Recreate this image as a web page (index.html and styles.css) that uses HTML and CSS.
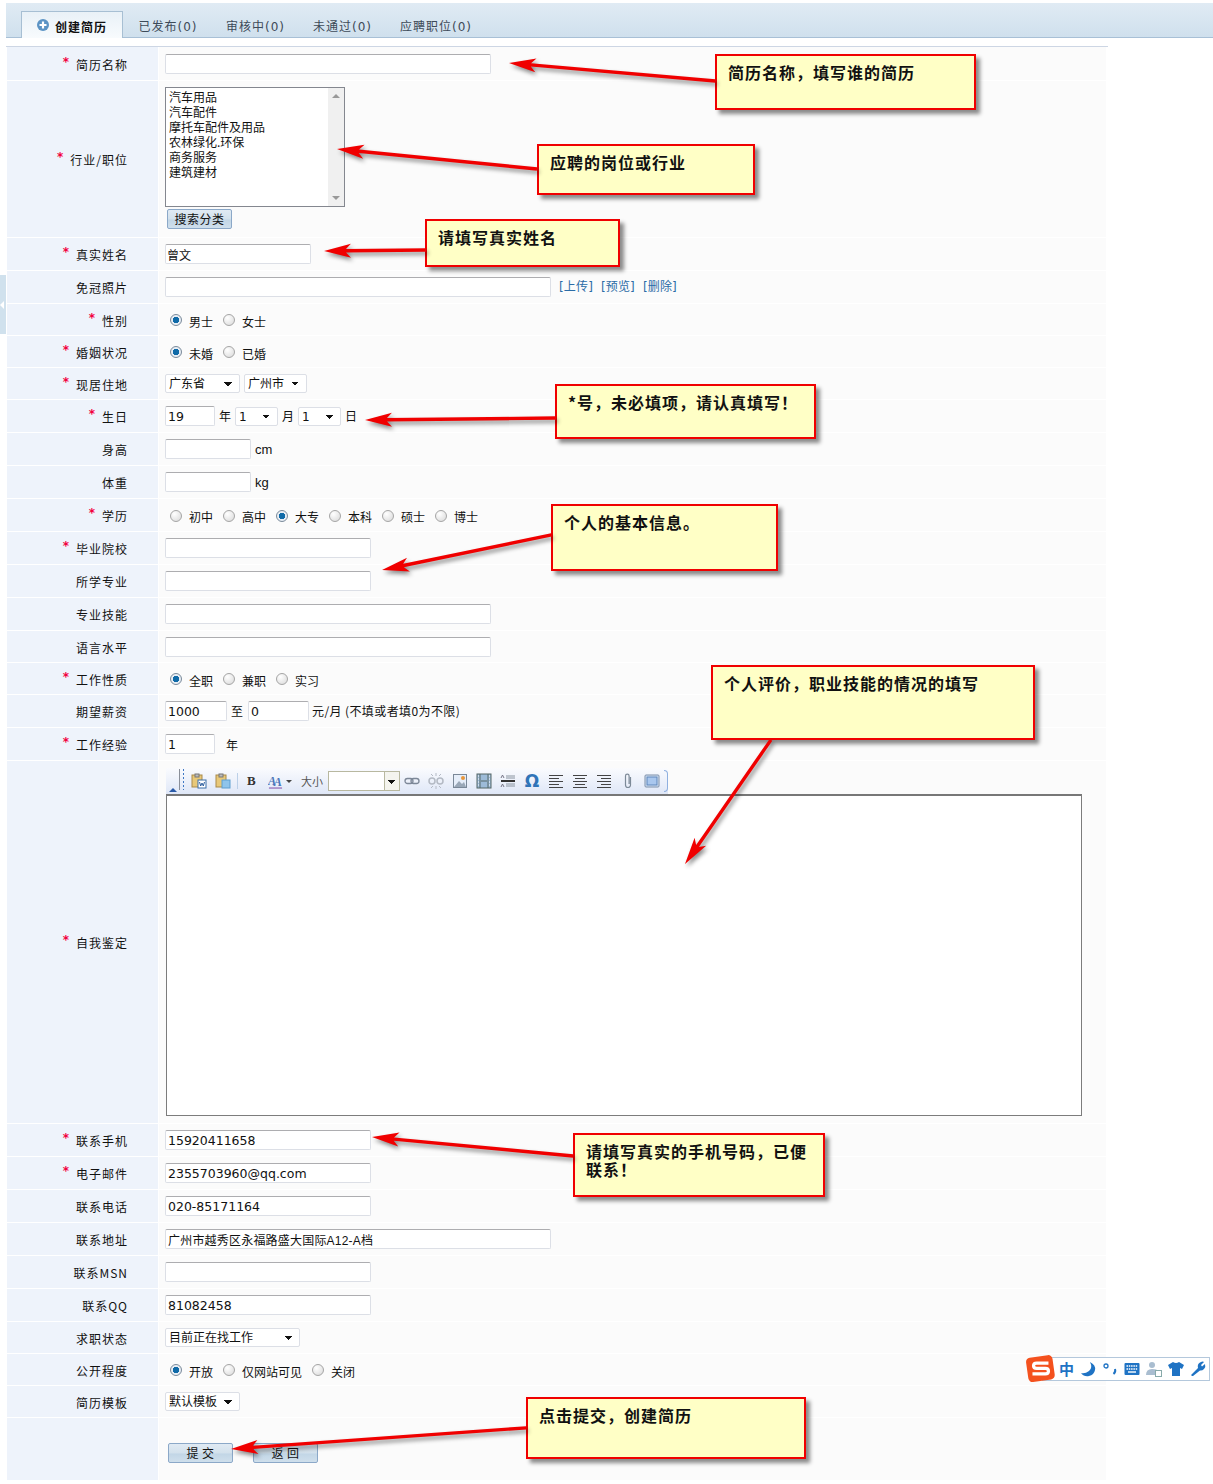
FILE: index.html
```html
<!DOCTYPE html>
<html lang="zh-CN">
<head>
<meta charset="utf-8">
<title>创建简历</title>
<link rel="stylesheet" href="styles.css">
</head>
<body>
<div class="page">
  <nav class="tabs">
    <a class="tab active"><svg class="plus" viewBox="0 0 12 12"><circle cx="6" cy="6" r="6" fill="#5b93c4"/><path d="M2.5 6h7M6 2.5v7" stroke="#fff" stroke-width="2.2"/></svg>创建简历</a>
    <a class="tab">已发布(0)</a>
    <a class="tab">审核中(0)</a>
    <a class="tab">未通过(0)</a>
    <a class="tab">应聘职位(0)</a>
  </nav>
  <div class="rule"></div>
  <form class="form">
    <div class="row first"><label class="lbl req">简历名称</label><div class="val"><input class="ipt w326"></div></div>
    <div class="row tall"><label class="lbl req">行业/职位</label>
      <div class="val stack">
        <div class="listbox">
          <div class="opts"><div>汽车用品</div><div>汽车配件</div><div>摩托车配件及用品</div><div>农林绿化.环保</div><div>商务服务</div><div>建筑建材</div></div>
          <div class="sbar"><i class="up"></i><i class="down"></i></div>
        </div>
        <button type="button" class="btn search">搜索分类</button>
      </div>
    </div>
    <div class="row"><label class="lbl req">真实姓名</label><div class="val"><input class="ipt w146 cjk" value="曾文"></div></div>
    <div class="row"><label class="lbl">免冠照片</label><div class="val"><input class="ipt w386"><span class="links"><a>[上传]</a><a>[预览]</a><a>[删除]</a></span></div></div>
    <div class="row short"><label class="lbl req">性别</label><div class="val radios"><input type="radio" name="a" checked><span>男士</span><input type="radio" name="a"><span>女士</span></div></div>
    <div class="row short"><label class="lbl req">婚姻状况</label><div class="val radios"><input type="radio" name="b" checked><span>未婚</span><input type="radio" name="b"><span>已婚</span></div></div>
    <div class="row short"><label class="lbl req">现居住地</label><div class="val gap4"><select class="sel w75"><option>广东省</option></select><select class="sel w63"><option>广州市</option></select></div></div>
    <div class="row"><label class="lbl req">生日</label><div class="val date"><input class="ipt w50" value="19"><span>年</span><select class="sel w43"><option>1</option></select><span>月</span><select class="sel w43"><option>1</option></select><span>日</span></div></div>
    <div class="row"><label class="lbl">身高</label><div class="val"><input class="ipt w86"><span class="unit">cm</span></div></div>
    <div class="row"><label class="lbl">体重</label><div class="val"><input class="ipt w86"><span class="unit">kg</span></div></div>
    <div class="row"><label class="lbl req">学历</label><div class="val radios"><input type="radio" name="c"><span>初中</span><input type="radio" name="c"><span>高中</span><input type="radio" name="c" checked><span>大专</span><input type="radio" name="c"><span>本科</span><input type="radio" name="c"><span>硕士</span><input type="radio" name="c"><span>博士</span></div></div>
    <div class="row"><label class="lbl req">毕业院校</label><div class="val"><input class="ipt w206"></div></div>
    <div class="row"><label class="lbl">所学专业</label><div class="val"><input class="ipt w206"></div></div>
    <div class="row"><label class="lbl">专业技能</label><div class="val"><input class="ipt w326"></div></div>
    <div class="row short"><label class="lbl">语言水平</label><div class="val"><input class="ipt w326"></div></div>
    <div class="row short"><label class="lbl req">工作性质</label><div class="val radios"><input type="radio" name="d" checked><span>全职</span><input type="radio" name="d"><span>兼职</span><input type="radio" name="d"><span>实习</span></div></div>
    <div class="row"><label class="lbl">期望薪资</label><div class="val salary"><input class="ipt w62" value="1000"><span>至</span><input class="ipt w61" value="0"><span class="note">元/月 (不填或者填0为不限)</span></div></div>
    <div class="row"><label class="lbl req">工作经验</label><div class="val"><input class="ipt w50" value="1"><span class="yr">年</span></div></div>
    <div class="row editor-row"><label class="lbl req">自我鉴定</label>
      <div class="val stack">
        <div class="toolbar">
          <i class="collapse"></i><i class="grip"></i>
          <svg class="ic first" viewBox="0 0 16 16"><rect x="1" y="2" width="10" height="12" fill="#e8c878" stroke="#a98a4a"/><rect x="4" y="1" width="4" height="3" fill="#bbb" stroke="#777"/><rect x="7" y="7" width="8" height="8" fill="#fff" stroke="#3b6ea8"/><path d="M8.5 9l1.2 4 1.3-3 1.3 3 1.2-4" fill="none" stroke="#2f5f9f"/></svg>
          <svg class="ic" viewBox="0 0 16 16"><rect x="1" y="2" width="10" height="12" fill="#e8c878" stroke="#a98a4a"/><rect x="4" y="1" width="4" height="3" fill="#bbb" stroke="#777"/><rect x="7" y="7" width="8" height="8" fill="#8fc4ea" stroke="#5f9fd0"/></svg>
          <i class="sep"></i>
          <b class="bold">B</b>
          <svg class="ic color" viewBox="0 0 16 16"><text x="0" y="12" class="ictext">A</text><text x="6" y="13" class="ictext">A</text><path d="M1 15.500h14" stroke="#8a5db0" stroke-width="1.2"/></svg>
          <i class="drop"></i>
          <span class="size">大小</span>
          <span class="sizebox"><i></i></span>
          <svg class="ic" viewBox="0 0 16 16"><rect x="1" y="5.500" width="8" height="5" rx="2.500" fill="none" stroke="#7d8898" stroke-width="1.300"/><rect x="7" y="5.500" width="8" height="5" rx="2.500" fill="none" stroke="#7d8898" stroke-width="1.300"/></svg>
          <svg class="ic" viewBox="0 0 16 16"><rect x="1" y="5" width="6" height="6" rx="3" fill="none" stroke="#b4bac4" stroke-width="1.5"/><rect x="9" y="5" width="6" height="6" rx="3" fill="none" stroke="#b4bac4" stroke-width="1.5"/><path d="M8 0v3M8 13v3M3 1l2 2M13 1l-2 2M3 15l2-2M13 15l-2-2" stroke="#b4bac4"/></svg>
          <svg class="ic" viewBox="0 0 16 16"><rect x="1.500" y="1.500" width="13" height="13" fill="#e6eefa" stroke="#7a8898"/><path d="M2 14l5-6 3 3 2-2 2 5z" fill="#9aa8b8"/><circle cx="11" cy="5" r="2" fill="#e8963c"/></svg>
          <svg class="ic" viewBox="0 0 16 16"><rect x="1" y="1" width="14" height="14" fill="#9dbbd8" stroke="#566"/><path d="M4 1v14M12 1v14M5 8h6" stroke="#566"/><path d="M2 3h1M2 6h1M2 9h1M2 12h1M13 3h1M13 6h1M13 9h1M13 12h1" stroke="#fff"/></svg>
          <svg class="ic" viewBox="0 0 16 16"><path d="M6 3h9M6 5h9M6 11h9M6 13h9" stroke="#8a94a0"/><path d="M1 8h14" stroke="#333" stroke-width="2"/><path d="M1 5l1.500-3 1.500 3M1 14l1.500-3 1.500 3" fill="none" stroke="#778"/></svg>
          <span class="omega">Ω</span>
          <svg class="ic" viewBox="0 0 16 16"><path d="M1 2.500h14M1 5.500h10M1 8.500h14M1 11.500h10M1 14.500h14" stroke="#444"/></svg>
          <svg class="ic" viewBox="0 0 16 16"><path d="M1 2.500h14M3 5.500h10M1 8.500h14M3 11.500h10M1 14.500h14" stroke="#444"/></svg>
          <svg class="ic" viewBox="0 0 16 16"><path d="M1 2.500h14M5 5.500h10M1 8.500h14M5 11.500h10M1 14.500h14" stroke="#444"/></svg>
          <svg class="ic" viewBox="0 0 16 16"><path d="M10.500 4v8a2.500 2.500 0 0 1-5 0V3a1.800 1.800 0 0 1 3.600 0v8" fill="none" stroke="#7d8a98" stroke-width="1.200"/></svg>
          <svg class="ic" viewBox="0 0 16 16"><rect x="1" y="2" width="14" height="12" rx="1" fill="#d5e3f5" stroke="#7b8ea8"/><rect x="3" y="4" width="10" height="8" fill="#a9c7ee" stroke="#5f86ba"/></svg>
          <i class="tbend"></i>
        </div>
        <div class="editbox"></div>
      </div>
    </div>
    <div class="row"><label class="lbl req">联系手机</label><div class="val"><input class="ipt w206" value="15920411658"></div></div>
    <div class="row"><label class="lbl req">电子邮件</label><div class="val"><input class="ipt w206" value="2355703960@qq.com"></div></div>
    <div class="row"><label class="lbl">联系电话</label><div class="val"><input class="ipt w206" value="020-85171164"></div></div>
    <div class="row"><label class="lbl">联系地址</label><div class="val"><input class="ipt w386 cjk addr" value="广州市越秀区永福路盛大国际A12-A档"></div></div>
    <div class="row"><label class="lbl">联系MSN</label><div class="val"><input class="ipt w206"></div></div>
    <div class="row"><label class="lbl">联系QQ</label><div class="val"><input class="ipt w206" value="81082458"></div></div>
    <div class="row short"><label class="lbl">求职状态</label><div class="val"><select class="sel w135"><option>目前正在找工作</option></select></div></div>
    <div class="row short"><label class="lbl">公开程度</label><div class="val radios"><input type="radio" name="e" checked><span>开放</span><input type="radio" name="e"><span>仅网站可见</span><input type="radio" name="e"><span>关闭</span></div></div>
    <div class="row short"><label class="lbl">简历模板</label><div class="val"><select class="sel w75"><option>默认模板</option></select></div></div>
    <div class="row last"><div class="lbl"></div><div class="val actions"><button type="button" class="btn">提 交</button><button type="button" class="btn">返 回</button></div></div>
  </form>
</div>

<div class="sidetab"><i></i></div>

<div class="note-box n1">简历名称，填写谁的简历</div>
<div class="note-box n2">应聘的岗位或行业</div>
<div class="note-box n3">请填写真实姓名</div>
<div class="note-box n4">*号，未必填项，请认真填写！</div>
<div class="note-box n5">个人的基本信息。</div>
<div class="note-box n6">个人评价，职业技能的情况的填写</div>
<div class="note-box n7">请填写真实的手机号码，已便联系！</div>
<div class="note-box n8">点击提交，创建简历</div>

<svg class="arrows" width="1213" height="1484" viewBox="0 0 1213 1484">
  <g fill="#f00000">
    <polygon transform="translate(509 63) rotate(5)" points="0,0 27,-7 22,-1.700 207,-1.700 207,1.700 22,1.700 27,7"/>
    <polygon transform="translate(337 149) rotate(5.700)" points="0,0 27,-7 22,-1.700 201,-1.700 201,1.700 22,1.700 27,7"/>
    <polygon transform="translate(324 251) rotate(-.6)" points="0,0 27,-7 22,-1.700 102,-1.700 102,1.700 22,1.700 27,7"/>
    <polygon transform="translate(365 420) rotate(-.6)" points="0,0 27,-7 22,-1.700 191,-1.700 191,1.700 22,1.700 27,7"/>
    <polygon transform="translate(382 570) rotate(-11.700)" points="0,0 27,-7 22,-1.700 173,-1.700 173,1.700 22,1.700 27,7"/>
    <polygon transform="translate(685 864) rotate(-55.300)" points="0,0 27,-7 22,-1.700 151,-1.700 151,1.700 22,1.700 27,7"/>
    <polygon transform="translate(372 1137) rotate(5.400)" points="0,0 27,-7 22,-1.700 202,-1.700 202,1.700 22,1.700 27,7"/>
    <polygon transform="translate(231 1449) rotate(-4.100)" points="0,0 27,-7 22,-1.700 296,-1.700 296,1.700 22,1.700 27,7"/>
  </g>
</svg>

<div class="ime">
  <svg class="ime-logo" viewBox="0 0 30 28"><rect x="2" y="2" width="25" height="23" rx="4" fill="#f4511e" transform="rotate(-8 15 14)"/><path d="M22 8.500H11q-3 0-3 2.500t3 2.500h8q3 0 3 2.500t-3 2.500H7" fill="none" stroke="#fff" stroke-width="3"/></svg>
  <span class="ime-zh">中</span>
  <svg class="ime-ic" viewBox="0 0 16 16"><path d="M10 1q3 6-1 9t-8 2q3 4 8 3t6-6-5-8z" fill="#1f73c4"/></svg>
  <svg class="ime-ic" viewBox="0 0 16 16"><circle cx="4" cy="5" r="2" fill="none" stroke="#1f73c4" stroke-width="1.300"/><path d="M13 8q1 3-1.500 5" fill="none" stroke="#1f73c4" stroke-width="2"/></svg>
  <svg class="ime-ic" viewBox="0 0 16 16"><rect x=".5" y="2" width="15" height="12" rx="1" fill="#1f73c4"/><path d="M2.500 5h11M2.500 8h11" stroke="#fff" stroke-width="1.400" stroke-dasharray="1.500 .8"/><path d="M4 11h8" stroke="#fff" stroke-width="1.400"/></svg>
  <svg class="ime-ic" viewBox="0 0 16 16"><circle cx="6" cy="4" r="3" fill="#a9bdd0"/><path d="M0 14q0-6 6-6t5 2v4z" fill="#a9bdd0"/><rect x="9.500" y="9.500" width="6" height="6" fill="#fff" stroke="#8aa"/></svg>
  <svg class="ime-ic" viewBox="0 0 16 16"><path d="M5 1L0 4l2 4 2-1v8h8V7l2 1 2-4-5-3q-3 2-6 0z" fill="#1f73c4"/></svg>
  <svg class="ime-ic" viewBox="0 0 16 16"><path d="M2 15l-1-1 7-7q-1-4 2-5.500T14 1l-3 3 1 1.500L15 3q1 3-1 5t-4 1.500l-7 5.500z" fill="#1f73c4"/></svg>
</div>
</body>
</html>
```
FILE: styles.css
```css
* { box-sizing: border-box; }
html, body { margin: 0; padding: 0; background: #fff; height: 1484px; overflow: hidden; }
body { position: relative; font: 12px/16px "Noto Sans CJK SC", sans-serif; color: #111; }
.page { padding: 3px 0 0 6px; }

/* tabs */
.tabs { display: flex; height: 35px; padding: 8px 0 0 15px; background: linear-gradient(#e0ebf4, #cfe0ed); border-bottom: 1px solid #a8c0d6; }
.tab { display: flex; align-items: center; justify-content: center; width: 87px; height: 27px; padding-top: 5px; color: #3d4a58; font: 12px/16px "DejaVu Sans", "Noto Sans CJK SC", sans-serif; letter-spacing: 1px; }
.tab:nth-child(2) { width: 88px; }
.tab:last-child { width: 100px; }
.tab.active { width: 102px; height: 27px; margin-right: 1px; padding-top: 3px; gap: 6px; background: linear-gradient(#e9f1f7, #f8fbfd); border: 1px solid #a7bfd3; border-bottom: 0; color: #111; font: 700 12px/16px "Noto Sans CJK SC", sans-serif; letter-spacing: 1px; }
.plus { width: 12px; height: 12px; margin-top: -4px; }
.rule { height: 1px; width: 1102px; margin-top: 8px; background: #cdd6e4; }

/* rows */
.form { width: 1099px; margin-left: 1px; }
.row { display: grid; grid-template-columns: 151px 1fr; column-gap: 1px; height: 32px; margin-bottom: 1px; }
.row.first { height: 33px; }
.row.short { height: 31px; }
.row.tall { height: 156px; }
.row.editor-row { height: 362px; }
.row.last { height: 62px; margin-bottom: 0; }
.lbl { display: flex; align-items: center; justify-content: flex-end; padding: 2px 30px 0 0; background: #eef3fb; letter-spacing: 1px; color: #111; }
.lbl.req::before { content: "*"; margin-right: 6px; color: #f2003c; font: 700 12px/10px "DejaVu Sans", sans-serif; align-self: center; margin-top: -6px; }
.val { display: flex; align-items: center; padding: 0 0 0 6px; background: #fbfbfb; }
.val.stack { flex-direction: column; align-items: flex-start; padding-top: 6px; }

/* controls */
.ipt { height: 20px; padding: 0 2px; background: #fff; border: 1px solid #dcdfe6; border-top-color: #adadb0; border-radius: 2px; font: 12.500px/18px "DejaVu Sans", "Noto Sans CJK SC", sans-serif; color: #111; outline: 0; }
.ipt.cjk { padding-left: 1px; font: 12px/18px "Liberation Sans", "Noto Sans CJK SC", sans-serif; }
.ipt.addr { padding-left: 2px; letter-spacing: .2px; }
.w50 { width: 50px; } .w61 { width: 61px; } .w62 { width: 62px; } .w86 { width: 86px; }
.w146 { width: 146px; } .w206 { width: 206px; } .w326 { width: 326px; } .w386 { width: 386px; }
.sel { appearance: none; height: 19px; padding: 1px 0 0 3px; background-color: #fff; background-image: linear-gradient(45deg, transparent 50%, #111 50%), linear-gradient(-45deg, transparent 50%, #111 50%); background-size: 4px 4px, 4px 4px; background-position: right 11px top 7px, right 7px top 7px; background-repeat: no-repeat; border: 1px solid #dcdfe6; border-radius: 2px; font: 12px/17px "DejaVu Sans", "Noto Sans CJK SC", sans-serif; color: #111; }
.w43 { width: 43px; } .w63 { width: 63px; } .w75 { width: 75px; } .w135 { width: 135px; }
.gap4 { gap: 4px; }
.date span { margin: 0 4px; }
.date span:last-child { margin-right: 0; }
.unit { margin: 2px 0 0 4px; font: 13px/16px "Liberation Sans", sans-serif; }
.yr { margin: 2px 0 0 11px; }
.salary span { margin: 0 5px 0 4px; }
.salary .note { margin: 0 0 0 3px; letter-spacing: .4px; }
.links { display: flex; gap: 8px; margin-left: 8px; }
.links a { color: #2b6ca6; font-family: "DejaVu Sans", "Noto Sans CJK SC", sans-serif; letter-spacing: .15px; }

.radios { padding-left: 11px; }
.radios input { appearance: none; width: 12px; height: 12px; margin: 1px 0 0 0; border: 1px solid #a5a5a5; border-radius: 50%; background: radial-gradient(circle at 35% 30%, #fff, #d8d8d8); flex: none; }
.radios input:checked { background: radial-gradient(circle, #0f6aa8 0 3px, #e8eef5 3.500px); border-color: #7a8a9a; }
.radios span { margin: 4px 10px 0 7px; color: #111; }

.listbox { display: flex; width: 180px; height: 120px; background: #fff; border: 1px solid #84878f; }
.opts { flex: 1; padding: 1px 0 0 3px; line-height: 15px; color: #111; }
.sbar { position: relative; width: 16px; background: #f0f0f0; }
.sbar i { position: absolute; left: 4px; border-left: 4px solid transparent; border-right: 4px solid transparent; }
.sbar .up { top: 6px; border-bottom: 4px solid #999; }
.sbar .down { bottom: 6px; border-top: 4px solid #999; }

.btn { width: 65px; height: 20px; padding: 0; background: linear-gradient(#e0eaf3, #d3e1ec 50%, #c2d6e6 55%, #cfdfec); border: 1px solid #8ba8c8; border-radius: 2px; font: 12px/16px "Noto Sans CJK SC", sans-serif; color: #111; letter-spacing: .5px; }
.search { margin: 2px 0 0 2px; }
.actions { align-items: flex-start; gap: 20px; padding: 25px 0 0 9px; }

/* editor */
.toolbar { position: relative; display: flex; align-items: center; width: 502px; height: 26px; margin: 1px 0 0 1px; background: linear-gradient(#fafbfe, #dfe7f7); color: #333; }
.collapse { position: absolute; left: 3px; bottom: 2px; border-left: 4px solid transparent; border-right: 4px solid transparent; border-bottom: 4px solid #2a5ba8; }
.grip { position: absolute; left: 13px; top: 1px; width: 5px; height: 21px; border-left: 1px solid #8a8f99; background: linear-gradient(#3f78c4 50%, transparent 50%) 3px 0/2px 4px repeat-y; }
.ic { flex: none; width: 16px; height: 16px; margin-right: 8px; }
.ic.first { margin-left: 25px; }
.sep { width: 1px; height: 16px; margin: 0 9px 0 -2px; background: #bcd0e8; }
.bold { width: 10px; margin-right: 11px; font: 700 13px/16px "Liberation Serif", serif; }
.ic.color { width: 15px; margin-right: 3px; }
.ictext { font: italic 700 13px "Liberation Serif", serif; fill: #4a76b8; }
.drop { width: 0; margin-right: 9px; border-left: 3px solid transparent; border-right: 3px solid transparent; border-top: 3px solid #444; border-bottom: 0; padding: 0 0; }
.size { width: 23px; margin-right: 4px; font-size: 11px; color: #555; white-space: nowrap; letter-spacing: 0; }
.sizebox { position: relative; flex: none; width: 72px; height: 20px; margin-right: 4px; background: #fff; border: 1px solid #b8b8a0; }
.sizebox i { position: absolute; right: 0; top: 0; bottom: 0; width: 15px; border-left: 1px solid #b8b8a0; background: linear-gradient(45deg, transparent 50%, #111 50%) 3px 8px/4px 4px no-repeat, linear-gradient(-45deg, transparent 50%, #111 50%) 7px 8px/4px 4px no-repeat, #f4f4ee; }
.omega { flex: none; width: 16px; margin-right: 8px; font: 700 17px/16px "DejaVu Sans", sans-serif; color: #2f74b8; text-align: center; }
.tbend { width: 4px; height: 22px; margin-left: -4px; border: 1px solid #8fb0e0; border-left: 0; border-radius: 0 4px 4px 0; }
.editbox { width: 916px; height: 322px; margin-left: 1px; background: #fff; border: 1px solid #7c7c7c; border-top: 2px solid #777; }

/* overlays */
.sidetab { position: absolute; left: 0; top: 275px; width: 6px; height: 59px; background: #d0e1ed; }
.sidetab i { position: absolute; left: 0; top: 26px; border: 4px solid transparent; border-right-color: #fff; border-left: 0; }
.note-box { position: absolute; padding: 7px 11px; background: #ffffc6; border: 2px solid #f00000; box-shadow: 4px 4px 4px rgba(0,0,0,.45); font: 700 16px/18px "Noto Sans CJK SC", sans-serif; letter-spacing: 1px; color: #111; }
.n1 { left: 715px; top: 54px; width: 261px; height: 56px; }
.n2 { left: 537px; top: 144px; width: 218px; height: 51px; }
.n3 { left: 425px; top: 219px; width: 195px; height: 48px; }
.n4 { left: 555px; top: 384px; width: 261px; height: 55px; }
.n5 { left: 551px; top: 504px; width: 227px; height: 67px; }
.n6 { left: 711px; top: 665px; width: 324px; height: 75px; }
.n7 { left: 573px; top: 1133px; width: 252px; height: 64px; }
.n8 { left: 526px; top: 1397px; width: 280px; height: 62px; }
.arrows { position: absolute; left: 0; top: 0; pointer-events: none; filter: drop-shadow(2px 3px 2px rgba(0,0,0,.45)); }

.ime { position: absolute; left: 1042px; top: 1357px; display: flex; align-items: center; gap: 6px; width: 168px; height: 24px; padding-left: 16px; background: #fff; border: 1px solid #b4c8dc; }
.ime-logo { position: absolute; left: -18px; top: -4px; width: 32px; height: 30px; }
.ime-zh { font: 700 15px/18px "Noto Sans CJK SC", sans-serif; color: #1f73c4; }
.ime-ic { flex: none; width: 16px; height: 16px; }
```
